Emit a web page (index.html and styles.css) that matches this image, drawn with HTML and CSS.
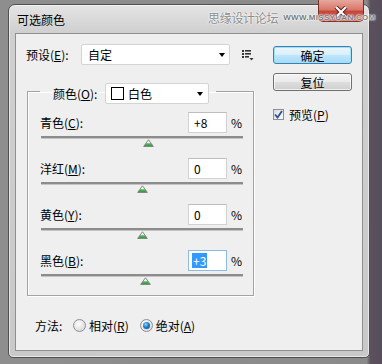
FILE: index.html
```html
<!DOCTYPE html>
<html lang="zh-CN">
<head>
  <meta charset="UTF-8">
  <title>可选颜色</title>
  <link rel="stylesheet" href="styles.css">
</head>
<body>
  <div class="window">
    <div class="titlebar"><span class="title">可选颜色</span></div>
    <div class="close-btn">
      <svg width="14" height="12" viewBox="0 0 14 12"><path d="M2 1 L12 11 M12 1 L2 11" stroke="#5a1a14" stroke-width="4"/><path d="M2 1 L12 11 M12 1 L2 11" stroke="#fff" stroke-width="2.2"/></svg>
    </div>
    <div class="watermark"><span class="wm-cn">思缘设计论坛</span><span class="wm-en">WWW.MISSYUAN.COM</span></div>

    <div class="client">
      <div class="main">
        <div class="preset-row">
          <span class="preset-label">预设(<u>E</u>):</span>
          <div class="combo preset-combo"><span>自定</span><i class="caret"></i></div>
          <svg class="preset-menu" width="12" height="11" viewBox="0 0 12 11">
            <rect x="0" y="0" width="2" height="2" fill="#333"/><rect x="3" y="0" width="6" height="1.6" fill="#333"/>
            <rect x="0" y="3" width="2" height="2" fill="#333"/><rect x="3" y="3" width="6" height="1.6" fill="#333"/>
            <rect x="0" y="6" width="2" height="2" fill="#333"/><rect x="3" y="6" width="4" height="1.6" fill="#333"/>
            <polygon points="7.5,8 11.5,8 9.5,10.5" fill="#333"/>
          </svg>
        </div>

        <fieldset class="group">
          <legend>
            <span class="legend-label">颜色(<u>O</u>):</span>
            <div class="combo color-combo"><span class="swatch"></span><span>白色</span><i class="caret"></i></div>
          </legend>

          <div class="row">
            <div class="row-head"><span class="row-label">青色(<u>C</u>):</span><div class="num">+8</div><span class="pct">%</span></div>
            <div class="track"></div>
            <div class="thumb-line"><svg class="thumb" style="margin-left: 102px" width="11" height="8" viewBox="0 0 11 8"><defs><linearGradient id="g1" x1="0" y1="0" x2="0" y2="1"><stop offset="0" stop-color="#ffffff"/><stop offset="0.45" stop-color="#eaf7e6"/><stop offset="0.6" stop-color="#49b856"/><stop offset="1" stop-color="#2a9a3a"/></linearGradient></defs><polygon points="5.5,0.8 10.3,7.4 0.7,7.4" fill="url(#g1)" stroke="#7a7a7a" stroke-width="0.9"/></svg></div>
          </div>

          <div class="row">
            <div class="row-head"><span class="row-label">洋红(<u>M</u>):</span><div class="num">0</div><span class="pct">%</span></div>
            <div class="track"></div>
            <div class="thumb-line"><svg class="thumb" style="margin-left: 96px" width="11" height="8" viewBox="0 0 11 8"><polygon points="5.5,0.8 10.3,7.4 0.7,7.4" fill="url(#g1)" stroke="#7a7a7a" stroke-width="0.9"/></svg></div>
          </div>

          <div class="row">
            <div class="row-head"><span class="row-label">黄色(<u>Y</u>):</span><div class="num">0</div><span class="pct">%</span></div>
            <div class="track"></div>
            <div class="thumb-line"><svg class="thumb" style="margin-left: 96px" width="11" height="8" viewBox="0 0 11 8"><polygon points="5.5,0.8 10.3,7.4 0.7,7.4" fill="url(#g1)" stroke="#7a7a7a" stroke-width="0.9"/></svg></div>
          </div>

          <div class="row">
            <div class="row-head"><span class="row-label">黑色(<u>B</u>):</span><div class="num focused"><span class="sel">+3</span></div><span class="pct">%</span></div>
            <div class="track"></div>
            <div class="thumb-line"><svg class="thumb" style="margin-left: 99px" width="11" height="8" viewBox="0 0 11 8"><polygon points="5.5,0.8 10.3,7.4 0.7,7.4" fill="url(#g1)" stroke="#7a7a7a" stroke-width="0.9"/></svg></div>
          </div>
        </fieldset>

        <div class="method">
          <span class="method-label">方法:</span>
          <span class="radio"></span><span class="radio-text">相对(<u>R</u>)</span>
          <span class="radio checked"></span><span class="radio-text">绝对(<u>A</u>)</span>
        </div>
      </div>

      <div class="side">
        <div class="btn btn-default">确定</div>
        <div class="btn">复位</div>
        <div class="check-row">
          <span class="checkbox">
            <svg width="9" height="9" viewBox="0 0 9 9"><path d="M1 4.5 L3.5 7.5 L8 1" fill="none" stroke="#2c4f9a" stroke-width="1.8"/></svg>
          </span>
          <span>预览(<u>P</u>)</span>
        </div>
      </div>
    </div>
  </div>
</body>
</html>
```

FILE: styles.css
```css
body {
  margin: 0;
  width: 382px;
  height: 364px;
  overflow: hidden;
  font-family: "Noto Sans CJK SC", "Liberation Sans", sans-serif;
  font-size: 12px;
  color: #000;
  background: linear-gradient(90deg, #8e8e8e 0%, #8a8a8a 96%, #5b505d 97%, #584d5a 100%);
}

.window {
  position: relative;
  box-sizing: border-box;
  width: 362px;
  height: 354px;
  margin: 4px 0 0 8px;
  padding: 0 6px 6px 6px;
  border: 1px solid #505050;
  border-radius: 7px 7px 5px 5px;
  background: linear-gradient(180deg, #e4e4e4 0px, #cfcfcf 28px, #c9c9c9 100%);
  box-shadow: inset 0 0 0 1px rgba(255, 255, 255, 0.55);
  display: flex;
  flex-direction: column;
}

.titlebar {
  height: 28px;
  display: flex;
  align-items: center;
  padding-left: 2px;
}

.title {
  font-size: 12px;
  padding-top: 1px;
}

.close-btn {
  position: absolute;
  top: -5px;
  right: 5px;
  width: 46px;
  height: 22px;
  box-sizing: border-box;
  border: 1px solid #7a3028;
  border-top: none;
  border-radius: 0 0 5px 5px;
  background: linear-gradient(180deg, #e7a89e 0%, #d9786a 45%, #c4463a 55%, #d2705f 100%);
  display: flex;
  align-items: center;
  justify-content: center;
  padding-top: 3px;
}

.watermark {
  position: absolute;
  z-index: 2;
  top: 4px;
  left: 199px;
  display: flex;
  align-items: center;
  white-space: nowrap;
  color: #8d8d8d;
  text-shadow: 0 0 2px #fff, 0 0 2px #fff;
}

.wm-cn {
  font-size: 12px;
  letter-spacing: -0.3px;
}

.wm-en {
  margin-left: 5px;
  font-family: "Liberation Sans", sans-serif;
  font-size: 8px;
  font-weight: bold;
  letter-spacing: 0.3px;
  color: #7a7a7a;
  text-shadow: 0 0 1px #fff, 0 0 2px #fff, 0 0 2px #fff;
}

.client {
  flex: 1;
  display: flex;
  padding: 10px 0 0 10px;
  background: #efefef;
  border: 1px solid #8f8f8f;
}

.main {
  width: 228px;
}

u {
  text-decoration: underline;
  text-underline-offset: 1px;
}

.preset-row {
  display: flex;
  align-items: center;
  height: 21px;
}

.preset-label {
  width: 55px;
}

.combo {
  box-sizing: border-box;
  height: 21px;
  background: #fff;
  border: 1px solid #d4d4d4;
  border-radius: 2px;
  display: flex;
  align-items: center;
}

.preset-combo {
  width: 149px;
  padding: 0 4px 0 6px;
}

.preset-combo span {
  flex: 1;
}

.caret {
  width: 0;
  height: 0;
  border-left: 3.5px solid transparent;
  border-right: 3.5px solid transparent;
  border-top: 4px solid #000;
}

.preset-menu {
  margin-left: 12px;
  margin-top: 2px;
}

.group {
  box-sizing: border-box;
  width: 227px;
  margin: 14px 0 0 1px;
  padding: 0 10px 10px 12px;
  border: 1px solid #a3a3a3;
  box-shadow: inset 1px 1px 0 #fff, 1px 1px 0 #fff;
}

.group legend {
  display: flex;
  align-items: center;
  padding: 4px 7px 0 13px;
}

.legend-label {
  width: 52px;
}

.color-combo {
  width: 104px;
  padding: 0 5px 0 5px;
}

.swatch {
  box-sizing: border-box;
  width: 13px;
  height: 13px;
  border: 1px solid #000;
  background: #fff;
  margin-right: 4px;
}

.color-combo span:nth-child(2) {
  flex: 1;
}

.row {
  margin-top: 8px;
}

.row + .row {
  margin-top: 11px;
}

.row-head {
  display: flex;
  align-items: center;
  height: 21px;
}

.row-label {
  flex: 1;
}

.num {
  box-sizing: border-box;
  width: 39px;
  height: 21px;
  background: #fff;
  border: 1px solid #d2d2d2;
  border-top-color: #bdbdbd;
  padding-left: 5px;
  display: flex;
  align-items: center;
}

.num.focused {
  border-color: #8cbbe6;
  padding-left: 3px;
}

.sel {
  background: #3399ff;
  color: #fff;
  padding: 0 1px;
  line-height: 15px;
}

.pct {
  margin-left: 4px;
  width: 12px;
}

.track {
  height: 2px;
  margin: 3px 0 0 1px;
  background: #8c8c8c;
  border-bottom: 1px solid #c4c4c4;
}

.thumb-line {
  height: 8px;
  margin-left: 1px;
}

.thumb {
  display: block;
}

.method {
  display: flex;
  align-items: center;
  height: 13px;
  margin-top: 23px;
  padding-left: 9px;
}

.method-label {
  width: 38px;
}

.radio {
  box-sizing: border-box;
  width: 13px;
  height: 13px;
  border-radius: 50%;
  border: 1px solid #8e8f8f;
  background: radial-gradient(circle at 40% 35%, #ffffff 0%, #e6e6e6 50%, #cfcfcf 100%);
  display: flex;
  align-items: center;
  justify-content: center;
}

.radio.checked::after {
  content: "";
  width: 7px;
  height: 7px;
  border-radius: 50%;
  background: radial-gradient(circle at 40% 35%, #8fd3ff 0%, #1d7fd0 45%, #0c3f7c 100%);
}

.radio-text {
  margin-left: 3px;
  margin-right: 11px;
}

.side {
  width: 79px;
  margin-left: 19px;
  padding-top: 2px;
  display: flex;
  flex-direction: column;
}

.btn {
  box-sizing: border-box;
  height: 18px;
  border: 1px solid #707070;
  border-radius: 3px;
  background: linear-gradient(180deg, #f3f3f3 0%, #ebebeb 48%, #dddddd 52%, #cfcfcf 100%);
  box-shadow: inset 0 0 0 1px rgba(255, 255, 255, 0.7);
  display: flex;
  align-items: center;
  justify-content: center;
  margin-bottom: 9px;
}

.btn-default {
  border-color: #3c7fb1;
  background: linear-gradient(180deg, #eaf6fd 0%, #d9f0fc 48%, #bee6fd 52%, #a7d9f5 100%);
  box-shadow: inset 0 0 0 1px #9fe0fa;
}

.check-row {
  display: flex;
  align-items: center;
  margin-top: 6px;
}

.checkbox {
  box-sizing: border-box;
  width: 11px;
  height: 11px;
  border: 1px solid #8e8f8f;
  background: linear-gradient(135deg, #dcdcdc, #fbfbfb);
  display: flex;
  align-items: center;
  justify-content: center;
  margin-right: 5px;
}
```
